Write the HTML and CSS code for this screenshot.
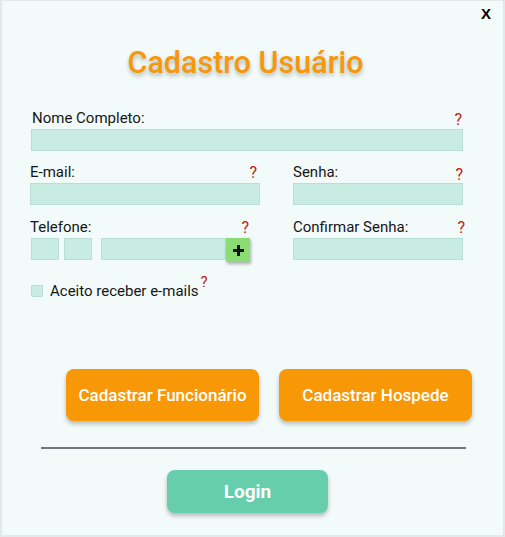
FILE: index.html
```html
<!DOCTYPE html>
<html lang="pt-BR">
<head>
<meta charset="utf-8">
<title>Cadastro Usuário</title>
<link rel="stylesheet" href="styles.css">
</head>
<body>
<div class="frame">
  <div class="close-row"><span class="close">X</span></div>
  <h1 class="title">Cadastro Usuário</h1>
  <form class="form">
    <div class="field full">
      <div class="label-row"><span class="label">Nome Completo:</span><span class="help h-nome">?</span></div>
      <div class="input"></div>
    </div>
    <div class="grid">
      <div class="field">
        <div class="label-row"><span class="label">E-mail:</span><span class="help h-email">?</span></div>
        <div class="input input-email"></div>
      </div>
      <div class="field">
        <div class="label-row"><span class="label">Senha:</span><span class="help h-senha">?</span></div>
        <div class="input"></div>
      </div>
      <div class="field">
        <div class="label-row"><span class="label">Telefone:</span><span class="help h-tel">?</span></div>
        <div class="phone">
          <div class="input box"></div>
          <div class="input box"></div>
          <div class="input number"></div>
          <div class="plus"><svg width="11" height="11" viewBox="0 0 11 11"><path d="M4 0h3v4h4v3H7v4H4V7H0V4h4z" fill="#111"/></svg></div>
        </div>
      </div>
      <div class="field">
        <div class="label-row"><span class="label">Confirmar Senha:</span><span class="help h-conf">?</span></div>
        <div class="input"></div>
      </div>
    </div>
    <label class="check"><span class="checkbox"></span><span class="check-text">Aceito receber e-mails</span><span class="help sup">?</span></label>
  </form>
  <div class="actions">
    <button class="btn orange" type="button">Cadastrar Funcionário</button>
    <button class="btn orange" type="button">Cadastrar Hospede</button>
  </div>
  <hr class="divider">
  <div class="login-row"><button class="btn login" type="button">Login</button></div>
</div>
</body>
</html>
```
FILE: styles.css
```css
* { box-sizing: border-box; }
html, body { margin: 0; padding: 0; }
body { font-family: Roboto, "Liberation Sans", sans-serif; color: #161616; }
.frame {
  width: 505px; height: 537px;
  border: 2px solid #e3e8e9;
  border-top-width: 1px;
  background: #f2fbf9;
  padding: 0 40px 0 29px;
  display: flex; flex-direction: column;
}
.close-row { display: flex; justify-content: flex-end; margin-right: -28px; padding-top: 4px; height: 22px; }
.close { font-weight: 900; font-size: 15px; color: #000; font-family: "Liberation Sans", Arial, sans-serif; line-height: 18px; }
.title {
  margin: 22px 0 0 0; text-align: center; font-size: 30.5px; font-weight: 500;
  color: #f7970b; line-height: 36px; text-shadow: 0 3px 4px rgba(0,0,0,0.25);
  padding-right: 3px;
}
.form { margin-top: 26px; }
.label-row { display: flex; justify-content: space-between; align-items: flex-end; height: 22px; padding-bottom: 2px; }
.label { font-size: 15px; line-height: 18px; }
.help { color: #c8170f; font-size: 16px; line-height: 17px; }
.h-nome { margin-right: 1px; position: relative; top: 1px; }
.h-email { margin-right: 3px; }
.h-senha { margin-right: 0; position: relative; top: 2px; }
.h-tel { margin-right: 11px; }
.h-conf { margin-right: -2px; }
.input { height: 22px; background: #c8ece2; border: 1px solid #b9ded3; }
.full .label-row { padding-left: 1px; }
.grid { display: grid; grid-template-columns: 230px 170px; column-gap: 33px; row-gap: 11px; margin-top: 10px; margin-left: -1px; }
.input-email { width: 230px; }
.phone { display: flex; align-items: flex-start; }
.box { width: 28px; margin-left: 1px; }
.box + .box { margin-left: 5px; }
.number { width: 125px; margin-left: 9px; }
.plus {
  width: 24px; height: 24px; background: #89dd74; display: flex; align-items: center; justify-content: center;
  box-shadow: 1px 2px 3px rgba(0,0,0,0.3);
}
.check { display: flex; align-items: center; margin-top: 20px; margin-left: 0; }
.checkbox { width: 12px; height: 12px; background: #c8ece2; border: 1px solid #b9ded3; border-radius: 1px; margin-right: 7px; }
.check-text { font-size: 15px; line-height: 18px; }
.sup { position: relative; top: -9px; margin-left: 2px; font-size: 15px; }
.actions { display: flex; gap: 20px; margin-top: 69px; padding-left: 35px; }
.btn {
  border: none; font-family: Roboto, "Liberation Sans", sans-serif; font-weight: 500; color: #fff;
  border-radius: 8px; box-shadow: 0 3px 4px rgba(0,0,0,0.25); padding: 0; flex-shrink: 0;
}
.orange { background: #f99806; width: 193px; height: 52px; font-size: 17px; }
.divider { border: none; height: 2px; background: #6f777a; margin: 26px -3px 0 10px; }
.login-row { display: flex; justify-content: center; margin-top: 21px; padding-left: 1px; }
.login { background: #66ceab; width: 161px; height: 43px; font-size: 19px; font-weight: 700; }
```
